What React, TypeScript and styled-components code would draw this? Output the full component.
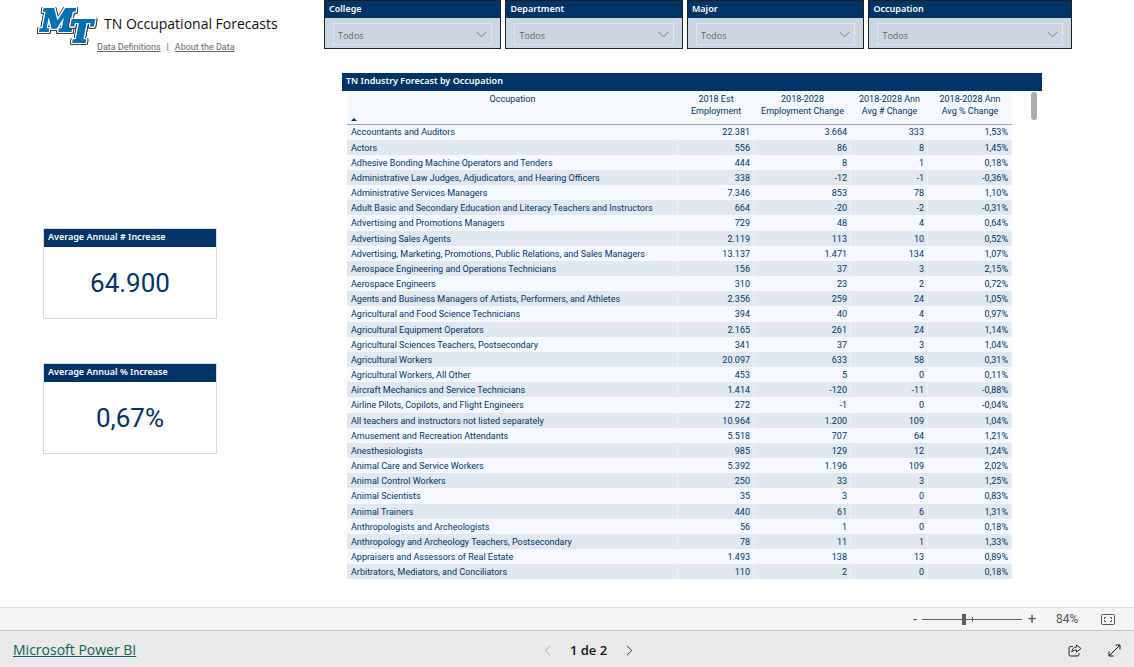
import React from "react";
import styled, { createGlobalStyle } from "styled-components";

const navy = "#003366";
const compactFont = `Roboto, "Open Sans", sans-serif`;

const GlobalStyle = createGlobalStyle`
  *, *::before, *::after { box-sizing: border-box; }
  body { margin: 0; background: #fff; font-family: "Open Sans", "Noto Sans", sans-serif; }
  button, select, input { font: inherit; color: inherit; margin: 0; }
`;

const Page = styled.div`
  min-height: 100vh;
  display: flex;
  flex-direction: column;
`;

const Report = styled.main`
  flex: 1;
  display: flex;
  padding-bottom: 27px;
`;

const Side = styled.aside`
  flex: none;
  width: 324px;
  padding: 5px 0 0 38px;
`;

const Brand = styled.header`
  display: flex;
  height: 48px;
`;

const Logo = styled.svg`
  flex: none;
  width: 62px;
  height: 42px;
  overflow: visible;
  font-family: "DejaVu Serif", serif;
  font-size: 30px;
  font-weight: 700;
  font-style: italic;
  fill: #0071b5;
  stroke: #0071b5;
  stroke-width: 2;
  text {
    filter: drop-shadow(1px 0 0 #fff) drop-shadow(-1px 0 0 #fff) drop-shadow(0 1px 0 #fff)
      drop-shadow(0 -1px 0 #fff) drop-shadow(1px 0 0 #444) drop-shadow(-1px 0 0 #444)
      drop-shadow(0 1px 0 #444);
  }
`;

const BrandText = styled.div`
  padding-top: 8px;
`;

const Title = styled.h1`
  margin: 0 0 0 4px;
  font-size: 14px;
  line-height: 22px;
  font-weight: 400;
  color: #111;
  white-space: nowrap;
`;

const Links = styled.nav`
  display: flex;
  gap: 6px;
  margin: 5px 0 0 -3px;
  font-family: ${compactFont};
  font-size: 9px;
  line-height: 14px;
  color: #666;
  white-space: nowrap;
  a { color: #666; text-decoration: underline; }
`;

const Cards = styled.div`
  display: grid;
  gap: 44px;
  width: 174px;
  margin: 175px 0 0 5px;
`;

const Card = styled.section`
  height: 91px;
  border: 1px solid #d9d9d9;
  display: flex;
  flex-direction: column;
`;

const Caption = styled.h2`
  margin: 0;
  padding: 0 4px 2px;
  background: ${navy};
  color: #fff;
  font-family: "Noto Sans", "Open Sans", sans-serif;
  font-size: 9px;
  line-height: 16px;
  font-weight: 600;
  white-space: nowrap;
`;

const Figure = styled.p`
  margin: 0;
  flex: 1;
  display: flex;
  align-items: center;
  justify-content: center;
  font-family: Roboto, sans-serif;
  font-size: 26px;
  line-height: 32px;
  color: ${navy};
`;

const Content = styled.div`
  flex: 1;
  min-width: 0;
`;

const Slicers = styled.div`
  display: grid;
  grid-template-columns: 177fr 177fr 177fr 203fr;
  gap: 4px;
  margin-right: 62px;
`;

const SlicerBox = styled.div`
  border: 1px solid #1f1f1f;
  background: #ccd6e0;
  height: 49px;
`;

const SlicerLabel = styled.label`
  display: block;
  padding: 0 4px 2px;
  background: ${navy};
  color: #fff;
  font-family: "Noto Sans", "Open Sans", sans-serif;
  font-size: 9px;
  line-height: 15px;
  font-weight: 600;
`;

const SelectWrap = styled.div`
  display: grid;
  align-items: center;
  margin: 5px 8px 0;
  svg { grid-area: 1 / 1; justify-self: end; margin-right: 5px; pointer-events: none; }
`;

const Select = styled.select`
  grid-area: 1 / 1;
  appearance: none;
  width: 100%;
  height: 22px;
  padding: 2px 4px 0;
  border: 1px solid #e1e6ec;
  border-radius: 0;
  background: transparent;
  color: #666;
  font-size: 9px;
`;

const TableVisual = styled.section`
  margin: 24px 92px 0 18px;
`;

const TableArea = styled.div`
  display: flex;
  justify-content: space-between;
  padding: 0 5px;
`;

const Grid = styled.table`
  flex: 1;
  margin-right: 19px;
  table-layout: fixed;
  border-collapse: collapse;
  color: ${navy};
  font-family: ${compactFont};
  font-size: 9px;
  line-height: 12px;
`;

const HeadCell = styled.th`
  height: 33px;
  padding: 2px 4px 0;
  background: #f5f9ff;
  border-bottom: 1px solid #8fa9c4;
  font-weight: 400;
  vertical-align: top;
  white-space: nowrap;
`;

const SortMark = styled.svg`
  display: block;
  width: 6px;
  height: 3px;
  margin-top: 13px;
`;

const Row = styled.tr`
  height: 15px;
  background: #f5f9ff;
  &:nth-child(even) { background: #e1e8f0; }
  &:nth-child(6n + 1) { height: 16px; }
`;

const Cell = styled.td<{ $number?: boolean }>`
  padding: 0 4px;
  text-align: ${(p) => (p.$number ? "right" : "left")};
  white-space: nowrap;
  box-shadow: inset -1px 0 rgba(255, 255, 255, 0.4);
`;

const ScrollThumb = styled.div`
  width: 6px;
  height: 28px;
  margin-top: 1px;
  border-radius: 3px;
  background: #adadad;
`;

const ZoomBar = styled.div`
  height: 23px;
  display: flex;
  align-items: center;
  justify-content: flex-end;
  padding-right: 19px;
  border-top: 1px solid #dcdcdc;
  background: #f4f4f4;
  color: #555;
  font-family: ${compactFont};
  font-size: 12px;
`;

const IconButton = styled.button`
  display: flex;
  align-items: center;
  justify-content: center;
  padding: 0;
  border: 0;
  background: none;
  line-height: 16px;
`;

const StepButton = styled(IconButton)`
  width: 8px;
  font-size: 15px;
`;

const ZoomRange = styled.input`
  appearance: none;
  width: 100px;
  height: 12px;
  margin: 0 6px 0 3px;
  background:
    linear-gradient(#605e5c, #605e5c) 50px 50% / 1px 5px no-repeat,
    linear-gradient(#605e5c, #605e5c) 0 50% / 100% 1px no-repeat;
  &::-webkit-slider-thumb { appearance: none; width: 4px; height: 11px; background: #605e5c; }
`;

const ZoomValue = styled.span`
  width: 24px;
  margin: 0 21px 0 20px;
`;

const Footer = styled.footer`
  height: 37px;
  display: grid;
  grid-template-columns: 1fr auto 1fr;
  align-items: center;
  padding: 2px 13px 0;
  border-top: 1px solid #c8c8c8;
  background: #eaeaea;
`;

const ProductLink = styled.a`
  justify-self: start;
  color: #0b6158;
  font-size: 14px;
  line-height: 20px;
`;

const Pager = styled.div`
  display: flex;
  align-items: center;
  gap: 19px;
  margin-left: 43px;
  font-size: 13px;
  line-height: 18px;
  font-weight: 600;
  color: #111;
`;

const FooterActions = styled.div`
  justify-self: end;
  display: flex;
  gap: 26px;
`;

type Forecast = [string, string, string, string, string];

const rows: Forecast[] = [
  ["Accountants and Auditors", "22.381", "3.664", "333", "1,53%"],
  ["Actors", "556", "86", "8", "1,45%"],
  ["Adhesive Bonding Machine Operators and Tenders", "444", "8", "1", "0,18%"],
  ["Administrative Law Judges, Adjudicators, and Hearing Officers", "338", "-12", "-1", "-0,36%"],
  ["Administrative Services Managers", "7.346", "853", "78", "1,10%"],
  ["Adult Basic and Secondary Education and Literacy Teachers and Instructors", "664", "-20", "-2", "-0,31%"],
  ["Advertising and Promotions Managers", "729", "48", "4", "0,64%"],
  ["Advertising Sales Agents", "2.119", "113", "10", "0,52%"],
  ["Advertising, Marketing, Promotions, Public Relations, and Sales Managers", "13.137", "1.471", "134", "1,07%"],
  ["Aerospace Engineering and Operations Technicians", "156", "37", "3", "2,15%"],
  ["Aerospace Engineers", "310", "23", "2", "0,72%"],
  ["Agents and Business Managers of Artists, Performers, and Athletes", "2.356", "259", "24", "1,05%"],
  ["Agricultural and Food Science Technicians", "394", "40", "4", "0,97%"],
  ["Agricultural Equipment Operators", "2.165", "261", "24", "1,14%"],
  ["Agricultural Sciences Teachers, Postsecondary", "341", "37", "3", "1,04%"],
  ["Agricultural Workers", "20.097", "633", "58", "0,31%"],
  ["Agricultural Workers, All Other", "453", "5", "0", "0,11%"],
  ["Aircraft Mechanics and Service Technicians", "1.414", "-120", "-11", "-0,88%"],
  ["Airline Pilots, Copilots, and Flight Engineers", "272", "-1", "0", "-0,04%"],
  ["All teachers and instructors not listed separately", "10.964", "1.200", "109", "1,04%"],
  ["Amusement and Recreation Attendants", "5.518", "707", "64", "1,21%"],
  ["Anesthesiologists", "985", "129", "12", "1,24%"],
  ["Animal Care and Service Workers", "5.392", "1.196", "109", "2,02%"],
  ["Animal Control Workers", "250", "33", "3", "1,25%"],
  ["Animal Scientists", "35", "3", "0", "0,83%"],
  ["Animal Trainers", "440", "61", "6", "1,31%"],
  ["Anthropologists and Archeologists", "56", "1", "0", "0,18%"],
  ["Anthropology and Archeology Teachers, Postsecondary", "78", "11", "1", "1,33%"],
  ["Appraisers and Assessors of Real Estate", "1.493", "138", "13", "0,89%"],
  ["Arbitrators, Mediators, and Conciliators", "110", "2", "0", "0,18%"],
];

const headings: [string, string][] = [
  ["2018 Est", "Employment"],
  ["2018-2028", "Employment Change"],
  ["2018-2028 Ann", "Avg # Change"],
  ["2018-2028 Ann", "Avg % Change"],
];

function Slicer({ name }: { name: string }) {
  const id = `slicer-${name.toLowerCase()}`;
  return (
    <SlicerBox>
      <SlicerLabel htmlFor={id}>{name}</SlicerLabel>
      <SelectWrap>
        <Select id={id} defaultValue="Todos">
          <option>Todos</option>
        </Select>
        <svg width="11" height="7" viewBox="0 0 11 7" fill="none" stroke="#777">
          <path d="M.5.8 5.5 5.8 10.5.8" />
        </svg>
      </SelectWrap>
    </SlicerBox>
  );
}

export default function App() {
  return (
    <>
      <GlobalStyle />
      <Page>
        <Report>
          <Side>
            <Brand>
              <Logo viewBox="0 0 62 42" role="img" aria-label="MT">
                <text x="3" y="26">M</text>
                <text x="32" y="37">T</text>
              </Logo>
              <BrandText>
                <Title>TN Occupational Forecasts</Title>
                <Links>
                  <a href="#definitions">Data Definitions</a>
                  <span>|</span>
                  <a href="#about">About the Data</a>
                </Links>
              </BrandText>
            </Brand>
            <Cards>
              <Card>
                <Caption>Average Annual # Increase</Caption>
                <Figure>64.900</Figure>
              </Card>
              <Card>
                <Caption>Average Annual % Increase</Caption>
                <Figure>0,67%</Figure>
              </Card>
            </Cards>
          </Side>
          <Content>
            <Slicers>
              <Slicer name="College" />
              <Slicer name="Department" />
              <Slicer name="Major" />
              <Slicer name="Occupation" />
            </Slicers>
            <TableVisual>
              <Caption>TN Industry Forecast by Occupation</Caption>
              <TableArea>
                <Grid>
                  <colgroup>
                    <col />
                    <col width="76" />
                    <col width="97" />
                    <col width="77" />
                    <col width="84" />
                  </colgroup>
                  <thead>
                    <tr>
                      <HeadCell>
                        Occupation
                        <SortMark viewBox="0 0 6 3" fill={navy}>
                          <path d="M0 3 3 0 6 3Z" />
                        </SortMark>
                      </HeadCell>
                      {headings.map(([first, second]) => (
                        <HeadCell key={second}>
                          {first}
                          <br />
                          {second}
                        </HeadCell>
                      ))}
                    </tr>
                  </thead>
                  <tbody>
                    {rows.map(([name, ...values]) => (
                      <Row key={name}>
                        <Cell>{name}</Cell>
                        {values.map((value, i) => (
                          <Cell key={i} $number>{value}</Cell>
                        ))}
                      </Row>
                    ))}
                  </tbody>
                </Grid>
                <ScrollThumb />
              </TableArea>
            </TableVisual>
          </Content>
        </Report>
        <ZoomBar>
          <StepButton aria-label="Zoom out">-</StepButton>
          <ZoomRange type="range" aria-label="Zoom" min={0} max={200} defaultValue={84} />
          <StepButton aria-label="Zoom in">+</StepButton>
          <ZoomValue>84%</ZoomValue>
          <IconButton aria-label="Fit to page">
            <svg width="14" height="11" viewBox="0 0 14 11" fill="none" stroke="#555">
              <rect x=".5" y=".5" width="13" height="10" rx="1" />
              <path d="M3.500 5V3.500H5M9 3.500h1.500V5M10.500 6v1.500H9M5 7.500H3.500V6" />
            </svg>
          </IconButton>
        </ZoomBar>
        <Footer>
          <ProductLink href="#powerbi">Microsoft Power BI</ProductLink>
          <Pager>
            <IconButton aria-label="Previous page" disabled>
              <svg width="7" height="11" viewBox="0 0 7 11" fill="none" stroke="#aaa">
                <path d="M6 .8 1.200 5.500 6 10.200" />
              </svg>
            </IconButton>
            <span>1 de 2</span>
            <IconButton aria-label="Next page">
              <svg width="7" height="11" viewBox="0 0 7 11" fill="none" stroke="#333">
                <path d="M1 .8 5.800 5.500 1 10.200" />
              </svg>
            </IconButton>
          </Pager>
          <FooterActions>
            <IconButton aria-label="Share">
              <svg width="14" height="13" viewBox="0 0 14 13" fill="none" stroke="#222">
                <path d="M5 2.500H2.500a1.500 1.500 0 0 0-1.500 1.500v6.500A1.500 1.500 0 0 0 2.500 12h7a1.500 1.500 0 0 0 1.500-1.500V9" />
                <path d="M8.500 1 13 4.500 8.500 8V6C6.500 6 5 6.600 3.800 8 4 5 5.800 3.200 8.500 3Z" />
              </svg>
            </IconButton>
            <IconButton aria-label="Full screen">
              <svg width="13" height="13" viewBox="0 0 13 13" fill="none" stroke="#111">
                <path d="M1 12 12 1M7.500 1H12v4.500M1 7.500V12h4.500" />
              </svg>
            </IconButton>
          </FooterActions>
        </Footer>
      </Page>
    </>
  );
}
